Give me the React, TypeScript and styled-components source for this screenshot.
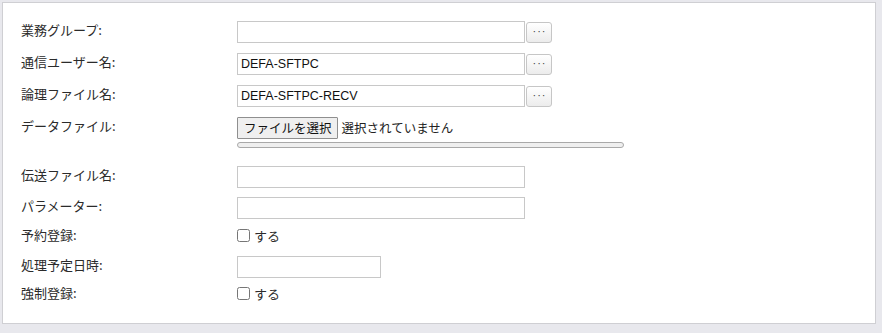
import * as React from 'react';
import styled, {createGlobalStyle} from 'styled-components';

const GlobalStyle = createGlobalStyle`
	html, body {
		margin: 0;
		padding: 0;
		background: #e8e8ed;
	}
	body {
		font-family: "Noto Sans CJK JP", "Liberation Sans", sans-serif;
		font-size: 13px;
		color: #333;
	}
`;

const Page = styled.div`
	padding: 2px 6px 9px 2px;
	height: 333px;
	box-sizing: border-box;
`;

const Panel = styled.div`
	background: #fff;
	border: 1px solid #cfcfd3;
	box-sizing: border-box;
	height: 322px;
	padding: 18px 18px 0 18px;
	display: flex;
	flex-direction: column;
`;

const Row = styled.div<{ $height: number; $gap: number }>`
	display: flex;
	align-items: flex-start;
	height: ${p => p.$height}px;
	margin-bottom: ${p => p.$gap}px;
`;

const Label = styled.label`
	width: 216px;
	flex: none;
	line-height: 17px;
	font-size: 13px;
	color: #2b2b2b;
	white-space: nowrap;
`;

const Field = styled.div`
	display: flex;
	align-items: flex-start;
	gap: 1px;
`;

const Input = styled.input<{ $width: number }>`
	width: ${p => p.$width}px;
	height: 22px;
	box-sizing: border-box;
	border: 1px solid #c8c8c8;
	padding: 0 3px;
	margin: 0;
	font-family: "Liberation Sans", "Noto Sans CJK JP", sans-serif;
	font-size: 12.5px;
	color: #111;
	outline: none;
	background: #fff;
`;

const PickButton = styled.button`
	width: 26px;
	height: 21px;
	margin-top: 1px;
	box-sizing: border-box;
	border: 1px solid #c6c6c6;
	border-radius: 3px;
	background: linear-gradient(#ffffff, #ececec);
	color: #444;
	font-family: "Liberation Sans", sans-serif;
	font-size: 11px;
	letter-spacing: 1px;
	line-height: 1;
	padding: 0 0 3px 1px;
	display: flex;
	align-items: center;
	justify-content: center;
`;

const FileBox = styled.div`
	display: flex;
	flex-direction: column;
	gap: 3px;
`;

const FileLine = styled.div`
	display: flex;
	align-items: center;
	gap: 4px;
`;

const FileButton = styled.button`
	height: 22px;
	box-sizing: border-box;
	border: 1px solid #8f8f8f;
	border-radius: 1px;
	background: #efefef;
	padding: 0 5px 0 6px;
	margin: 0;
	font-family: "Noto Sans CJK JP", sans-serif;
	font-size: 12.5px;
	color: #111;
	line-height: 20px;
`;

const FileNote = styled.span`
	font-size: 12.5px;
	color: #222;
	line-height: 20px;
`;

const Progress = styled.div`
	width: 387px;
	height: 6px;
	box-sizing: border-box;
	border: 1px solid #a9a9a9;
	border-radius: 3px;
	background: #efefef;
`;

const Check = styled.label`
	display: flex;
	align-items: center;
	gap: 4px;
	height: 18px;
	font-size: 13px;
	color: #2b2b2b;
`;

const Box = styled.input`
	width: 13px;
	height: 13px;
	margin: 0;
`;

const App: React.FC = () =>
	<Page>
		<GlobalStyle />
		<Panel>
			<Row $height={22} $gap={10}>
				<Label>業務グループ:</Label>
				<Field>
					<Input $width={288} defaultValue="" />
					<PickButton>···</PickButton>
				</Field>
			</Row>
			<Row $height={22} $gap={10}>
				<Label>通信ユーザー名:</Label>
				<Field>
					<Input $width={288} defaultValue="DEFA-SFTPC" />
					<PickButton>···</PickButton>
				</Field>
			</Row>
			<Row $height={22} $gap={10}>
				<Label>論理ファイル名:</Label>
				<Field>
					<Input $width={288} defaultValue="DEFA-SFTPC-RECV" />
					<PickButton>···</PickButton>
				</Field>
			</Row>
			<Row $height={31} $gap={18}>
				<Label>データファイル:</Label>
				<FileBox>
					<FileLine>
						<FileButton>ファイルを選択</FileButton>
						<FileNote>選択されていません</FileNote>
					</FileLine>
					<Progress />
				</FileBox>
			</Row>
			<Row $height={22} $gap={9}>
				<Label>伝送ファイル名:</Label>
				<Input $width={288} defaultValue="" />
			</Row>
			<Row $height={22} $gap={7}>
				<Label>パラメーター:</Label>
				<Input $width={288} defaultValue="" />
			</Row>
			<Row $height={22} $gap={8}>
				<Label>予約登録:</Label>
				<Check><Box type="checkbox" />する</Check>
			</Row>
			<Row $height={22} $gap={6}>
				<Label>処理予定日時:</Label>
				<Input $width={144} defaultValue="" />
			</Row>
			<Row $height={22} $gap={0}>
				<Label>強制登録:</Label>
				<Check><Box type="checkbox" />する</Check>
			</Row>
		</Panel>
	</Page>;

export default App;
